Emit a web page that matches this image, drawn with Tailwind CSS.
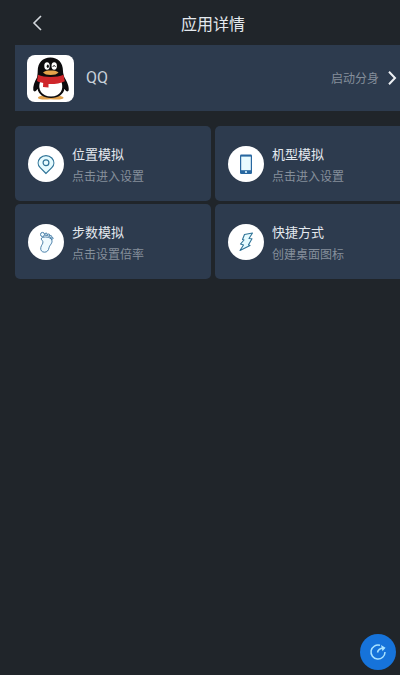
<!DOCTYPE html>
<html lang="zh-CN">
<head>
<meta charset="utf-8">
<meta name="viewport" content="width=device-width, initial-scale=1">
<title>应用详情</title>
<script src="https://cdn.jsdelivr.net/npm/@tailwindcss/browser@4"></script>
</head>
<body class="min-h-screen overflow-x-hidden bg-[#20252a] font-['Noto_Sans_CJK_SC',sans-serif] text-[#e4e9ee]">
<header class="grid h-[45px] grid-cols-[1fr_auto_1fr] items-center pl-[26px]">
  <button type="button" aria-label="返回" class="flex h-11 w-6 items-center justify-center">
    <svg class="h-4 w-4" viewBox="0 0 16 16" fill="none" stroke="#d3d8dc" stroke-width="1.6"><path d="M11 1 4 8l7 7"/></svg>
  </button>
  <h1 class="text-[16px] leading-6">应用详情</h1>
</header>
<main class="overflow-hidden pl-[15px]">
  <button type="button" class="flex h-[66px] w-full items-center bg-[#2d3b4e] pl-3 pr-[2px] text-left">
    <svg class="h-[47px] w-[47px] shrink-0" viewBox="0 0 47 47">
      <rect width="47" height="47" rx="8" fill="#fff"/>
      <path d="M11 42.500C12 40.500 18 40 23 42c5-2 12-1.500 13.500.5.5 2-6 2.500-13 1.700-6 .8-13 .3-12.500-1.700z" fill="#e0a04c"/>
      <path d="M10.700 16C10.700 7.500 16 2.500 23.400 2.500S36 7.500 36 16c0 2 .5 4 1.500 6.500 2.500 4 4.700 9 4.200 12.500-.7 2.500-2.700 1.500-4.200-1.300C36.500 39 31.500 43 24 43s-12.500-4-13.500-9.300c-1.500 2.800-3.500 3.800-4.200 1.300C5.800 31.500 7.500 26.500 10 22.500c.5-2.500.7-4.500.7-6.500z" fill="#0c0b0d"/>
      <path d="M13 27h21.500c2.500 7-1 14.500-10.500 14.500S10.500 34 13 27z" fill="#fff"/>
      <ellipse cx="20" cy="11" rx="2.700" ry="3.700" fill="#fff"/>
      <ellipse cx="27.200" cy="11" rx="2.700" ry="3.700" fill="#fff"/>
      <ellipse cx="20.800" cy="11.300" rx="1.100" ry="1.700" fill="#111"/>
      <path d="M26 12c0-2 2.300-2 2.300 0" fill="none" stroke="#111" stroke-width="1"/>
      <path d="M16 17.500c2-1.700 4.500-2 7.700-2s6 .3 7.800 2c-1.500 1.700-4 2.500-7.800 2.500s-6.200-.8-7.700-2.500z" fill="#e5a34b"/>
      <path d="M11 19.800c6.500 3 19 3 25.500 0l1.300 6.400c-4.500 2.300-10.500 3-16.300 2.800V32.500l-5.500-.5.200-4c-2.200-.3-4.700-1-6.200-1.900z" fill="#cf262b"/>
    </svg>
    <span class="ml-3 font-[Roboto,sans-serif] text-[16px] leading-6 text-[#c8d0d9]">QQ</span>
    <span class="ml-auto text-[12px] leading-4 text-[#858f9b]">启动分身</span>
    <svg class="ml-[7px] h-4 w-3 shrink-0" viewBox="0 0 12 16" fill="none" stroke="#eef1f4" stroke-width="2"><path d="m3 1.800 6 6.200-6 6.200"/></svg>
  </button>
  <div class="-mr-[11px] mt-[15px] grid auto-rows-[75px] grid-cols-2 gap-x-1 gap-y-[3px]">
    <button type="button" class="flex items-center gap-2 rounded-[5px] bg-[#2d3b4e] px-[13px] text-left">
      <span class="flex h-9 w-9 shrink-0 items-center justify-center rounded-full bg-white">
        <svg class="h-[22px] w-[22px]" viewBox="0 0 22 22" fill="#e5fbff" stroke="#2f7397" stroke-width="1.200"><path d="M11 20.500 5.200 14.700C2.500 12 2.500 8 5.200 5 8.400 1.800 13.600 1.800 16.800 5c2.700 3 2.700 7 0 9.700z"/><circle cx="11" cy="9.800" r="2.900"/></svg>
      </span>
      <span class="flex flex-col gap-1 pt-0.5"><span class="text-[13px] leading-[18px]">位置模拟</span><span class="text-[12px] leading-[18px] text-[#858f9b]">点击进入设置</span></span>
    </button>
    <button type="button" class="flex items-center gap-2 rounded-[5px] bg-[#2d3b4e] px-[13px] text-left">
      <span class="flex h-9 w-9 shrink-0 items-center justify-center rounded-full bg-white">
        <svg class="h-[22px] w-[22px]" viewBox="0 0 22 22"><rect x="5" y="1.500" width="12" height="19.500" rx="1.200" fill="#2867a0"/><path d="M6.200 3.600h9.600v13.600H6.200z" fill="#e9fbff"/><circle cx="11" cy="19" r="1.100" fill="#d9f4ff"/></svg>
      </span>
      <span class="flex flex-col gap-1 pt-0.5"><span class="text-[13px] leading-[18px]">机型模拟</span><span class="text-[12px] leading-[18px] text-[#858f9b]">点击进入设置</span></span>
    </button>
    <button type="button" class="flex items-center gap-2 rounded-[5px] bg-[#2d3b4e] px-[13px] text-left">
      <span class="flex h-9 w-9 shrink-0 items-center justify-center rounded-full bg-white">
        <svg class="h-[22px] w-[22px]" viewBox="0 0 22 22" fill="#effaff" stroke="#37729f" stroke-width=".9"><path d="M6.500 7c2.500-1.800 9-1.200 10.300 2 1.200 3.200-2.300 5-2.800 7.800-.4 2.600-2 4.400-4.500 4.400-2.700 0-4.300-2-3.700-4.700.5-2.600 2.500-3.700 2.100-5.800C7.600 9.200 5.500 8.700 6.500 7z"/><ellipse cx="7.500" cy="3.500" rx="2" ry="2.100"/><circle cx="11.100" cy="3.300" r="1.200"/><circle cx="13.600" cy="4.100" r="1.100"/><circle cx="15.700" cy="5.500" r="1"/><circle cx="17.400" cy="7.300" r=".8"/></svg>
      </span>
      <span class="flex flex-col gap-1 pt-0.5"><span class="text-[13px] leading-[18px]">步数模拟</span><span class="text-[12px] leading-[18px] text-[#858f9b]">点击设置倍率</span></span>
    </button>
    <button type="button" class="flex items-center gap-2 rounded-[5px] bg-[#2d3b4e] px-[13px] text-left">
      <span class="flex h-9 w-9 shrink-0 items-center justify-center rounded-full bg-white">
        <svg class="h-[22px] w-[22px]" viewBox="0 0 22 22" fill="#e5fbff" stroke="#2f7397" stroke-width="1.100" stroke-linejoin="round"><path d="M9.500 3.500 17.500 2 14 7.500l3 .3-3.500 6 1.500.7L5 19.500 8.500 14 5.500 13 9 9 7.500 8.500z"/></svg>
      </span>
      <span class="flex flex-col gap-1 pt-0.5"><span class="text-[13px] leading-[18px]">快捷方式</span><span class="text-[12px] leading-[18px] text-[#858f9b]">创建桌面图标</span></span>
    </button>
  </div>
</main>
<button type="button" aria-label="刷新" class="fixed bottom-[5px] right-1 flex h-9 w-9 items-center justify-center rounded-full bg-[#1673da]">
  <svg class="h-5 w-5" viewBox="0 0 20 20" fill="none" stroke="#a9e3ff" stroke-width="1.500"><path d="M12 3.300A7 7 0 1 0 17 10"/><path d="M9.500 10.500C10 8 12 6.400 15.300 6"/><path d="m13 3 4.500 2.700-3 3.600z" fill="#a9e3ff" stroke="none"/></svg>
</button>
</body>
</html>
